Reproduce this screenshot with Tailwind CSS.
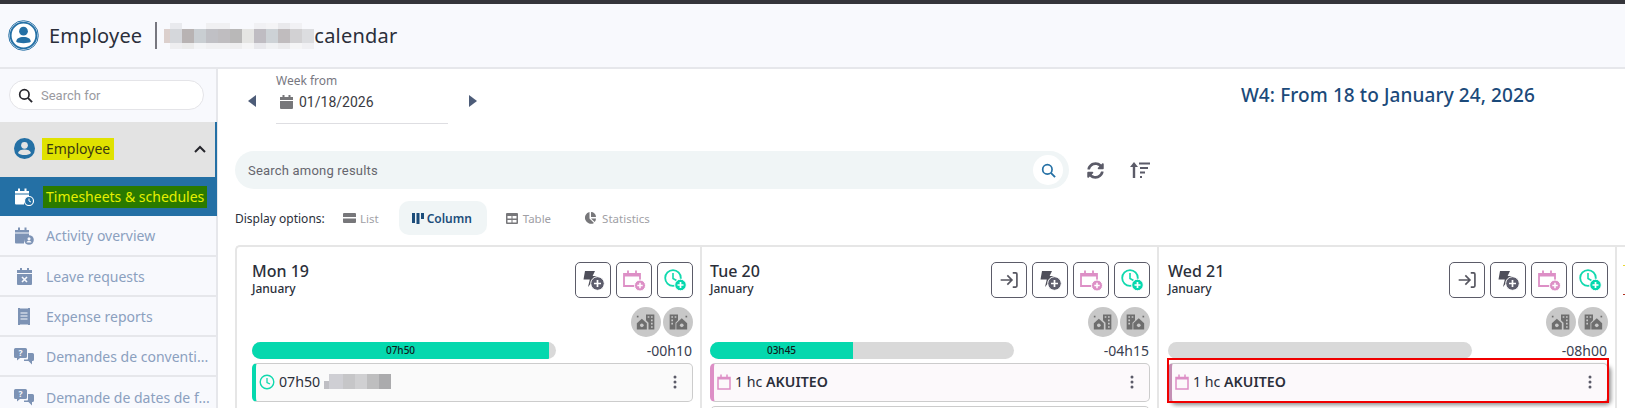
<!DOCTYPE html>
<html>
<head>
    <meta charset="utf-8">
    <title>Employee calendar</title>
    <script src="https://cdn.jsdelivr.net/npm/@tailwindcss/browser@4"></script>
</head>
<body class="w-[1625px] h-[408px] overflow-hidden bg-white font-['Noto_Sans','Open_Sans',sans-serif] text-[#2b2f3a]">
    <svg class="hidden" xmlns="http://www.w3.org/2000/svg">
        <symbol id="bolt" viewBox="0 0 24 24">
            <path fill="#4f4f5a" d="M4 3h10l-2.400 5H16L7 19l1.800-7.500H2.500z"/>
            <circle cx="16.500" cy="15.500" r="6.800" fill="#5d5d6c" stroke="#fff" stroke-width="1"/>
            <path stroke="#fff" stroke-width="1.700" d="M16.500 12v7M13 15.500h7"/>
        </symbol>
        <symbol id="calplus" viewBox="0 0 24 24">
            <path fill="none" stroke="#dd8fc6" stroke-width="1.800" d="M2 6h16v12H2zM6 2.500v3M14 2.500v3"/>
            <path fill="#dd8fc6" d="M2 5h16v3.500H2z"/>
            <circle cx="18" cy="17.500" r="5.500" fill="#dd8fc6" stroke="#fff"/>
            <path stroke="#fff" stroke-width="1.500" d="M18 14.800v5.400M15.300 17.500h5.400"/>
        </symbol>
        <symbol id="clockplus" viewBox="0 0 24 24">
            <circle cx="10" cy="10" r="7.800" fill="none" stroke="#10d9ae" stroke-width="1.800"/>
            <path fill="none" stroke="#10d9ae" stroke-width="1.600" d="M10 5v5.500l3.500 2"/>
            <circle cx="17.500" cy="17" r="5.800" fill="#05d8ae" stroke="#fff"/>
            <path stroke="#fff" stroke-width="1.700" d="M17.500 14v6M14.500 17h6"/>
        </symbol>
        <symbol id="enter" viewBox="0 0 24 24">
            <path fill="none" stroke="#55555f" stroke-width="2" d="M2 12h13M10 6.500l5.500 5.500-5.500 5.500M16.500 3.500h3.500a1.500 1.500 0 0 1 1.500 1.500v14a1.500 1.500 0 0 1-1.500 1.500h-3.500"/>
        </symbol>
        <symbol id="homework" viewBox="0 0 24 24">
            <path fill="#6e6e6e" d="M1 13.500l6-5.500 6 5.500V21H1z"/>
            <circle cx="7" cy="16" r="2.200" fill="#c8c8c8"/>
            <path fill="#6e6e6e" d="M12 3h10v18h-7v-8l-3-3z"/>
            <path fill="#c8c8c8" d="M14 5h2v2h-2zM18 5h2v2h-2zM18 9h2v2h-2zM18 13h2v2h-2zM18 17h2v2h-2z"/>
            <path fill="#6e6e6e" d="M1 4.500h2v2H1z"/>
        </symbol>
        <symbol id="workhome" viewBox="0 0 24 24">
            <path fill="#6e6e6e" d="M2 3h10v7l-3 3v8H2z"/>
            <path fill="#c8c8c8" d="M4 5h2v2H4zM8 5h2v2H8zM4 9h2v2H4zM4 13h2v2H4z"/>
            <path fill="#6e6e6e" d="M10 13.500l6.500-6 6.500 6V21H10z"/>
            <circle cx="16.500" cy="16" r="2.200" fill="#c8c8c8"/>
            <path fill="#6e6e6e" d="M21 4.500h2v2h-2z"/>
        </symbol>
        <symbol id="cal" viewBox="0 0 16 16">
            <path fill="none" stroke="#dd8fc6" stroke-width="1.500" d="M2 3.500h12V15H2zM5 .5v3M11 .5v3"/>
            <path fill="#dd8fc6" d="M2 3h12v2.500H2z"/>
        </symbol>
        <symbol id="kebab" viewBox="0 0 4 14">
            <circle cx="2" cy="2" r="1.500" fill="#5b5b68"/><circle cx="2" cy="7" r="1.500" fill="#5b5b68"/><circle cx="2" cy="12" r="1.500" fill="#5b5b68"/>
        </symbol>
        <symbol id="chat" viewBox="0 0 20 17">
            <path fill="#7d93b5" d="M1.500 0h10A1.500 1.500 0 0 1 13 1.500v7a1.500 1.500 0 0 1-1.500 1.500H6l-3 2.500V10H1.500A1.500 1.500 0 0 1 0 8.500v-7A1.500 1.500 0 0 1 1.500 0z"/>
            <path fill="#7d93b5" d="M14 5h4.500A1.500 1.500 0 0 1 20 6.500v5a1.500 1.500 0 0 1-1.500 1.500H18v3.500L14.500 13H10v-1.500h3.500A1 1 0 0 0 14 10.500z"/>
            <text x="6.500" y="7.800" font-size="8.500" font-weight="700" fill="#f8f9fd" text-anchor="middle" font-family="Noto Sans">?</text>
        </symbol>
    </svg>

    <div class="h-[4px] bg-[#35353b]"></div>

    <header class="h-[65px] bg-[#f8f9fd] border-b-2 border-[#e6e7eb] flex items-center pl-[8px]">
        <svg class="w-[31px] h-[31px] shrink-0" viewBox="0 0 32 32">
            <circle cx="16" cy="16" r="15.300" fill="none" stroke="#2470a5" stroke-width="1"/>
            <circle cx="16" cy="16" r="13.300" fill="#fff" stroke="#2470a5" stroke-width="2"/>
            <circle cx="16" cy="11.500" r="4.500" fill="#2470a5"/>
            <path fill="#2470a5" d="M8.500 22.500c0-3.500 3-5 7.500-5s7.500 1.500 7.500 5c-1.500 1-4.500 1.500-7.500 1.500s-6-.5-7.500-1.500z"/>
        </svg>
        <span class="ml-[10px] text-[20px] leading-[28px] tracking-[0.2px]">Employee</span>
        <div class="ml-[13px] w-[2px] h-[27px] bg-[#77777f]"></div>
        <svg class="ml-[7px] shrink-0 block" width="150" height="26" viewBox="0 0 150 26">
            <path fill="#e9eaee" d="M6 0h12v6H6z"/><path fill="#f0f0f2" d="M42 0h24v6H42z"/><path fill="#f1f1f4" d="M90 0h12v6H90z"/><path fill="#f4f4f6" d="M102 0h12v6h-12z"/><path fill="#e9e9ec" d="M114 0h12v6h-12z"/><path fill="#f1f1f4" d="M126 0h12v6h-12z"/>
            <path fill="#dcd0cd" d="M0 6h6v14H0z"/><path fill="#d5d7db" d="M6 6h12v14H6z"/><path fill="#b8b3b3" d="M18 6h12v14H18z"/><path fill="#c9ced2" d="M30 6h12v14H30z"/><path fill="#c0c0c5" d="M42 6h12v14H42z"/><path fill="#bfbdc0" d="M54 6h12v14H54z"/><path fill="#b9b8b8" d="M66 6h12v14H66z"/><path fill="#e5e5e3" d="M78 6h12v14H78z"/><path fill="#bfbcc2" d="M90 6h12v14H90z"/><path fill="#cdd2d6" d="M102 6h12v14h-12z"/><path fill="#c0bcbe" d="M114 6h12v14h-12z"/><path fill="#d2d1d3" d="M126 6h12v14h-12z"/><path fill="#dcdde0" d="M138 6h12v14h-12z"/>
            <path fill="#eeeef0" d="M6 20h12v6H6z"/><path fill="#ebebeb" d="M18 20h12v6H18z"/><path fill="#f3f4f6" d="M30 20h12v6H30z"/><path fill="#f0f0f2" d="M42 20h24v6H42z"/><path fill="#eeeeef" d="M66 20h12v6H66z"/><path fill="#f5f5f6" d="M78 20h12v6H78z"/><path fill="#e8e8ec" d="M90 20h12v6H90z"/><path fill="#f0f1f3" d="M102 20h12v6h-12z"/><path fill="#ebebed" d="M114 20h12v6h-12z"/><path fill="#f5f5f6" d="M126 20h12v6h-12z"/><path fill="#f0f0f3" d="M138 20h12v6h-12z"/>
        </svg>
        <span class="text-[20px] leading-[28px] tracking-[0.2px]">calendar</span>
    </header>

    <div class="flex h-[339px] overflow-hidden">
        <aside class="w-[218px] shrink-0 bg-[#f8f9fd] border-r-2 border-[#e6e7eb] text-[14px]">
            <div class="pt-[11px] pl-[9px] pr-[12px] h-[53px]">
                <div class="h-[30px] bg-white border border-[#e4e4e8] rounded-full flex items-center pl-[8px]">
                    <svg class="w-[15px] h-[15px]" viewBox="0 0 16 16"><circle cx="6.800" cy="6.800" r="5" fill="none" stroke="#26262c" stroke-width="1.800"/><path stroke="#26262c" stroke-width="2" d="M10.500 10.500l4.500 4.500"/></svg>
                    <span class="ml-[8px] pt-[1px] text-[#9a9a9f] text-[13px] font-['Roboto',sans-serif]">Search for</span>
                </div>
            </div>
            <div class="h-[55px] bg-[#e3e3e3] border-r-2 border-[#2470a5] -mr-[1px] flex items-center pl-[14px] pb-[2px]">
                <svg class="w-[21px] h-[21px] shrink-0" viewBox="0 0 20 20"><circle cx="10" cy="10" r="10" fill="#2470a5"/><circle cx="10" cy="7" r="3.200" fill="#e3e3e3"/><path fill="#e3e3e3" d="M3.800 14.300c.6-2.300 3-3.300 6.200-3.300s5.600 1 6.200 3.300c-1.500 1.300-3.700 2-6.200 2s-4.700-.7-6.200-2z"/></svg>
                <span class="ml-[7px] h-[22px] leading-[22px] px-[4px] bg-[#e0e200] text-[#3a3a10]">Employee</span>
                <svg class="ml-auto mr-[9px] w-[12px] h-[8px]" viewBox="0 0 12 8"><path fill="none" stroke="#26262c" stroke-width="2" d="M1 7l5-5 5 5"/></svg>
            </div>
            <div class="h-[39px] bg-[#2470a5] -mr-[1px] flex items-center pl-[15px]">
                <svg class="w-[19px] h-[18px] shrink-0" viewBox="0 0 19 18">
                    <path fill="#fff" d="M0 3h14v2.500H0zM0 6.500h14v3a6 6 0 0 0-5 7H1a1 1 0 0 1-1-1zM3 .5h2V3H3zM9.500.5h2V3h-2z"/>
                    <circle cx="14" cy="13" r="4.500" fill="#2470a5" stroke="#fff" stroke-width="1.200"/><path fill="none" stroke="#fff" d="M14 10.500V13l2 1"/>
                </svg>
                <span class="ml-[9px] h-[22px] leading-[22px] px-[3px] bg-[#2a7a00] text-[#e6f000] whitespace-nowrap">Timesheets &amp; schedules</span>
            </div>
            <div class="h-[41px] border-b-2 border-[#e6e7eb] flex items-center pl-[15px] text-[#8ba0bf]">
                <svg class="w-[19px] h-[18px] shrink-0" viewBox="0 0 19 18">
                    <path fill="#7d93b5" d="M0 3h14v2.500H0zM0 6.500h14v3a6 6 0 0 0-5 7H1a1 1 0 0 1-1-1zM3 .5h2V3H3zM9.500.5h2V3h-2z"/>
                    <circle cx="14" cy="13" r="4.800" fill="#7d93b5"/><circle cx="14" cy="11.800" r="1.500" fill="#f8f9fd"/><path fill="#f8f9fd" d="M11.500 15.500c.3-1.200 1.200-1.700 2.500-1.700s2.200.5 2.500 1.700z"/>
                </svg>
                <span class="ml-[12px]">Activity overview</span>
            </div>
            <div class="h-[40px] border-b-2 border-[#e6e7eb] flex items-center pl-[17px] pt-[1px] text-[#8ba0bf]">
                <svg class="w-[15px] h-[17px] shrink-0" viewBox="0 0 15 17"><path fill="#7d93b5" d="M0 2h15v3H0zM0 6h15v10a1 1 0 0 1-1 1H1a1 1 0 0 1-1-1zM3 0h2v2H3zM10 0h2v2h-2z"/><path stroke="#f8f9fd" stroke-width="1.600" d="M5 9l5 5M10 9l-5 5"/></svg>
                <span class="ml-[14px]">Leave requests</span>
            </div>
            <div class="h-[40px] border-b-2 border-[#e6e7eb] flex items-center pl-[18px] pt-[1px] text-[#8ba0bf]">
                <svg class="w-[12px] h-[17px] shrink-0" viewBox="0 0 12 17"><path fill="#7d93b5" d="M0 0h2l1 1 1-1 1 1 1-1 1 1 1-1 1 1 1-1h2v17h-2l-1-1-1 1-1-1-1 1-1-1-1 1-1-1-1 1H0z"/><path stroke="#f8f9fd" d="M2.500 5h7M2.500 8h7M2.500 11h7"/></svg>
                <span class="ml-[16px]">Expense reports</span>
            </div>
            <div class="h-[40px] border-b-2 border-[#e6e7eb] flex items-center pl-[14px] pt-[1px] text-[#8ba0bf]">
                <svg class="w-[20px] h-[17px] shrink-0"><use href="#chat"/></svg>
                <span class="ml-[12px] whitespace-nowrap">Demandes de conventi...</span>
            </div>
            <div class="h-[40px] flex items-center pl-[14px] pt-[1px] text-[#8ba0bf]">
                <svg class="w-[20px] h-[17px] shrink-0"><use href="#chat"/></svg>
                <span class="ml-[12px] whitespace-nowrap">Demande de dates de f...</span>
            </div>
        </aside>

        <main class="flex-1 min-w-0 pl-[17px]">
            <div class="h-[82px] flex">
                <svg class="ml-[13px] mt-[26px] w-[8px] h-[12px]" viewBox="0 0 8 12"><path fill="#4d5c78" d="M8 0v12L0 6z"/></svg>
                <div class="ml-[20px] w-[172px] h-[55px] border-b border-[#dedee2] pt-[4px]">
                    <div class="text-[12px] leading-[16px] text-[#77777f]">Week from</div>
                    <div class="mt-[3px] ml-[4px] flex items-center h-[20px]">
                        <svg class="w-[13px] h-[14px]" viewBox="0 0 13 14"><path fill="#77777a" d="M0 2h13v3H0zM0 6h13v7a1 1 0 0 1-1 1H1a1 1 0 0 1-1-1zM2.500 0h2v2h-2zM8.500 0h2v2h-2z"/></svg>
                        <span class="ml-[6px] text-[14px] font-['Roboto',sans-serif] text-[#3a3a42]">01/18/2026</span>
                    </div>
                </div>
                <svg class="ml-[21px] mt-[26px] w-[8px] h-[12px]" viewBox="0 0 8 12"><path fill="#4d5c78" d="M0 0v12l8-6z"/></svg>
                <div class="ml-auto mr-[90px] mt-[13px] h-[26px] text-[19px] leading-[26px] font-medium tracking-[0.1px] text-[#1b4a7a] whitespace-nowrap">W4: From 18 to January 24, 2026</div>
            </div>

            <div class="flex items-center h-[38px]">
                <div class="w-[834px] h-[38px] bg-[#f0f5f6] rounded-full flex items-center pl-[13px] pr-[6px]">
                    <span class="pt-[1px] text-[13px] font-['Roboto',sans-serif] text-[#66666e] tracking-[0.2px]">Search among results</span>
                    <span class="ml-auto w-[30px] h-[30px] rounded-full bg-white flex items-center justify-center">
                        <svg class="w-[15px] h-[15px]" viewBox="0 0 16 16"><circle cx="6.800" cy="6.800" r="5" fill="none" stroke="#2470a5" stroke-width="1.800"/><path stroke="#2470a5" stroke-width="2" d="M10.500 10.500l4.500 4.500"/></svg>
                    </span>
                </div>
                <svg class="ml-[18px] w-[17px] h-[17px]" viewBox="0 0 512 512"><path fill="#5b5b68" d="M370.700 133.300C339.500 104 298.900 88 255.800 88c-77.500.1-144.300 53.200-162.800 126.900-1.300 5.400-6.100 9.100-11.700 9.100H24.100c-7.500 0-13.200-6.800-11.800-14.200C33.900 94.900 134.800 8 256 8c66.400 0 126.800 26.100 171.300 68.700L463 41c15.100-15.100 41-4.400 41 17v134c0 13.300-10.700 24-24 24H346c-21.400 0-32.100-25.900-17-41zM32 296h134c21.400 0 32.100 25.900 17 41l-41.700 41.700c31.200 29.300 71.800 45.300 114.900 45.300 77.400-.1 144.300-53.100 162.800-126.800 1.300-5.400 6.100-9.100 11.700-9.100h57.300c7.500 0 13.200 6.800 11.800 14.200C478.100 417.100 377.200 504 256 504c-66.400 0-126.800-26.100-171.300-68.700L49 471c-15.100 15.100-41 4.400-41-17V320c0-13.300 10.700-24 24-24z"/></svg>
                <svg class="ml-[26px] w-[20px] h-[18px]" viewBox="0 0 20 18"><path fill="#5b5b68" d="M4 1l4 5H5.200v11H2.800V6H0zM9 1.500h11v2H9zM10 6h8v2h-8zM10 10.500h5v2h-5zM10 15h2v2h-2z"/></svg>
            </div>

            <div class="mt-[12px] h-[34px] flex items-center text-[11.500px]">
                <span class="w-[108px] pt-[1px] text-[#2b2f3a] text-[12px]">Display options:</span>
                <svg class="w-[13px] h-[10px]" viewBox="0 0 13 10"><path fill="#77777a" d="M1 0h11a1 1 0 0 1 1 1v3H0V1a1 1 0 0 1 1-1zM0 5.500h13V9a1 1 0 0 1-1 1H1a1 1 0 0 1-1-1z"/></svg>
                <span class="ml-[4px] pt-[1px] text-[#a0a0a5]">List</span>
                <div class="ml-[20px] w-[88px] h-[34px] rounded-[10px] bg-[#f0f5f6] flex items-center pl-[13px]">
                    <svg class="w-[12px] h-[11px]" viewBox="0 0 12 11"><path fill="#1c4d7a" d="M0 0h3v10H0zM4.500 0h3v11h-3zM9 0h3v6H9z"/></svg>
                    <span class="ml-[3px] pt-[1px] text-[12px] font-semibold text-[#1c4d7a]">Column</span>
                </div>
                <svg class="ml-[19px] w-[12px] h-[11px]" viewBox="0 0 12 11"><path fill="#77777a" d="M1 0h10a1 1 0 0 1 1 1v9a1 1 0 0 1-1 1H1a1 1 0 0 1-1-1V1a1 1 0 0 1 1-1zm.5 3v2.500h4V3zm5 0v2.500h4V3zm-5 4v2.500h4V7zm5 0v2.500h4V7z"/></svg>
                <span class="ml-[5px] pt-[1px] text-[#a0a0a5]">Table</span>
                <svg class="ml-[33px] w-[12px] h-[12px]" viewBox="0 0 12 12"><path fill="#77777a" d="M5.500 0v6.500l4.500 4.500A6 6 0 1 1 5.500 0zM7 0a5 5 0 0 1 5 5H7zM7 6.500h5a6 6 0 0 1-1.300 3.600z"/></svg>
                <span class="ml-[6px] pt-[1px] text-[#a0a0a5]">Statistics</span>
            </div>

            <div class="mt-[10px] border-2 border-b-0 border-r-0 border-[#e6e6e6] rounded-tl-[5px] flex h-[163px] overflow-hidden">
                <section class="w-[465px] shrink-0 border-r-2 border-[#e6e6e6] pl-[15px] pr-[7px] pt-[15px]">
                    <div class="flex justify-between h-[36px]">
                        <div>
                            <div class="text-[16px] leading-[18px] font-medium">Mon 19</div>
                            <div class="text-[12px] leading-[18px] font-medium">January</div>
                        </div>
                        <div class="flex gap-[5px]">
                            <button class="w-[36px] h-[36px] border border-[#5b5b68] rounded-[5px] flex items-center justify-center"><svg class="w-[24px] h-[24px]"><use href="#bolt"/></svg></button>
                            <button class="w-[36px] h-[36px] border border-[#5b5b68] rounded-[5px] flex items-center justify-center"><svg class="w-[24px] h-[24px]"><use href="#calplus"/></svg></button>
                            <button class="w-[36px] h-[36px] border border-[#5b5b68] rounded-[5px] flex items-center justify-center"><svg class="w-[24px] h-[24px]"><use href="#clockplus"/></svg></button>
                        </div>
                    </div>
                    <div class="mt-[9px] flex justify-end gap-[2px]">
                        <span class="w-[30px] h-[30px] rounded-full bg-[#c8c8c8] flex items-center justify-center"><svg class="w-[20px] h-[20px]"><use href="#homework"/></svg></span>
                        <span class="w-[30px] h-[30px] rounded-full bg-[#c8c8c8] flex items-center justify-center"><svg class="w-[20px] h-[20px]"><use href="#workhome"/></svg></span>
                    </div>
                    <div class="mt-[5px] h-[17px] flex items-center justify-between">
                        <div class="w-[304px] h-[17px] rounded-full bg-[#d9d9d9] overflow-hidden">
                            <div class="w-[297px] h-[17px] bg-[#05d8ae] text-[10px] leading-[17px] text-center text-[#10201c] font-medium">07h50</div>
                        </div>
                        <span class="mr-[1px] text-[14px] text-[#3a4050]">-00h10</span>
                    </div>
                    <div class="mt-[4px] h-[39px] bg-[#fafafa] border border-[#cccccc] border-l-[4px] border-l-[#05d8ae] rounded-[5px] flex items-center pl-[3px] pr-[15px] pb-[2px]">
                        <svg class="w-[16px] h-[16px] shrink-0" viewBox="0 0 16 16"><circle cx="8" cy="8" r="6.800" fill="none" stroke="#10d9ae" stroke-width="1.400"/><path fill="none" stroke="#10d9ae" stroke-width="1.300" d="M8 4v4.500l3 1.500"/></svg>
                        <span class="ml-[4px] text-[14.200px]">07h50</span>
                        <svg class="ml-[4px] block" width="67" height="15" viewBox="0 0 67 15"><path fill="#bfbfc4" d="M0 7h5v8H0z"/><path fill="#cfcfd4" d="M5 0h14v15H5z"/><path fill="#c6c6c8" d="M19 0h12v15H19z"/><path fill="#d0d0d2" d="M31 0h12v15H31z"/><path fill="#bebebf" d="M43 0h12v15H43z"/><path fill="#ababad" d="M55 0h12v15H55z"/></svg>
                        <svg class="ml-auto w-[4px] h-[14px]"><use href="#kebab"/></svg>
                    </div>
                </section>

                <section class="w-[457px] shrink-0 border-r-2 border-[#e6e6e6] pl-[8px] pr-[7px] pt-[15px]">
                    <div class="flex justify-between h-[36px]">
                        <div>
                            <div class="text-[16px] leading-[18px] font-medium">Tue 20</div>
                            <div class="text-[12px] leading-[18px] font-medium">January</div>
                        </div>
                        <div class="flex gap-[5px]">
                            <button class="w-[36px] h-[36px] border border-[#5b5b68] rounded-[5px] flex items-center justify-center"><svg class="w-[20px] h-[20px]"><use href="#enter"/></svg></button>
                            <button class="w-[36px] h-[36px] border border-[#5b5b68] rounded-[5px] flex items-center justify-center"><svg class="w-[24px] h-[24px]"><use href="#bolt"/></svg></button>
                            <button class="w-[36px] h-[36px] border border-[#5b5b68] rounded-[5px] flex items-center justify-center"><svg class="w-[24px] h-[24px]"><use href="#calplus"/></svg></button>
                            <button class="w-[36px] h-[36px] border border-[#5b5b68] rounded-[5px] flex items-center justify-center"><svg class="w-[24px] h-[24px]"><use href="#clockplus"/></svg></button>
                        </div>
                    </div>
                    <div class="mt-[9px] flex justify-end gap-[2px]">
                        <span class="w-[30px] h-[30px] rounded-full bg-[#c8c8c8] flex items-center justify-center"><svg class="w-[20px] h-[20px]"><use href="#homework"/></svg></span>
                        <span class="w-[30px] h-[30px] rounded-full bg-[#c8c8c8] flex items-center justify-center"><svg class="w-[20px] h-[20px]"><use href="#workhome"/></svg></span>
                    </div>
                    <div class="mt-[5px] h-[17px] flex items-center justify-between">
                        <div class="w-[304px] h-[17px] rounded-full bg-[#d9d9d9] overflow-hidden">
                            <div class="w-[143px] h-[17px] bg-[#05d8ae] text-[10px] leading-[17px] text-center text-[#10201c] font-medium">03h45</div>
                        </div>
                        <span class="mr-[1px] text-[14px] text-[#3a4050]">-04h15</span>
                    </div>
                    <div class="mt-[4px] h-[39px] bg-[#fcf9fb] border border-[#cccccc] border-l-[4px] border-l-[#dd8fc6] rounded-[5px] flex items-center pl-[2px] pr-[15px] pb-[2px]">
                        <svg class="w-[16px] h-[16px] shrink-0"><use href="#cal"/></svg>
                        <span class="ml-[3px] text-[14.200px]">1 hc <span class="font-semibold">AKUITEO</span></span>
                        <svg class="ml-auto w-[4px] h-[14px]"><use href="#kebab"/></svg>
                    </div>
                    <div class="mt-[4px] h-[39px] border border-[#cccccc] rounded-[5px]"></div>
                </section>

                <section class="w-[458px] shrink-0 border-r-2 border-[#e6e6e6] pl-[9px] pr-[7px] pt-[15px]">
                    <div class="flex justify-between h-[36px]">
                        <div>
                            <div class="text-[16px] leading-[18px] font-medium">Wed 21</div>
                            <div class="text-[12px] leading-[18px] font-medium">January</div>
                        </div>
                        <div class="flex gap-[5px]">
                            <button class="w-[36px] h-[36px] border border-[#5b5b68] rounded-[5px] flex items-center justify-center"><svg class="w-[20px] h-[20px]"><use href="#enter"/></svg></button>
                            <button class="w-[36px] h-[36px] border border-[#5b5b68] rounded-[5px] flex items-center justify-center"><svg class="w-[24px] h-[24px]"><use href="#bolt"/></svg></button>
                            <button class="w-[36px] h-[36px] border border-[#5b5b68] rounded-[5px] flex items-center justify-center"><svg class="w-[24px] h-[24px]"><use href="#calplus"/></svg></button>
                            <button class="w-[36px] h-[36px] border border-[#5b5b68] rounded-[5px] flex items-center justify-center"><svg class="w-[24px] h-[24px]"><use href="#clockplus"/></svg></button>
                        </div>
                    </div>
                    <div class="mt-[9px] flex justify-end gap-[2px]">
                        <span class="w-[30px] h-[30px] rounded-full bg-[#c8c8c8] flex items-center justify-center"><svg class="w-[20px] h-[20px]"><use href="#homework"/></svg></span>
                        <span class="w-[30px] h-[30px] rounded-full bg-[#c8c8c8] flex items-center justify-center"><svg class="w-[20px] h-[20px]"><use href="#workhome"/></svg></span>
                    </div>
                    <div class="mt-[5px] h-[17px] flex items-center justify-between">
                        <div class="w-[304px] h-[17px] rounded-full bg-[#d9d9d9]"></div>
                        <span class="mr-[1px] text-[14px] text-[#3a4050]">-08h00</span>
                    </div>
                    <div class="relative mt-[4px] h-[39px] bg-[#fcf9fb] border border-[#cccccc] border-l-[4px] border-l-[#c48fb4] rounded-[5px] flex items-center pl-[2px] pr-[15px] pb-[2px] shadow-[3px_3px_4px_rgba(0,0,0,0.45)]">
                        <svg class="w-[16px] h-[16px] shrink-0"><use href="#cal"/></svg>
                        <span class="ml-[3px] text-[14.200px]">1 hc <span class="font-semibold">AKUITEO</span></span>
                        <svg class="ml-auto w-[4px] h-[14px]"><use href="#kebab"/></svg>
                        <div class="absolute -left-[5px] -right-[2px] -top-[6px] -bottom-[2px] border-2 border-[#f00000]"></div>
                    </div>
                </section>

                <section class="flex-1 pl-[6px] pt-[18px]">
                    <div class="w-[2px] h-[1px] bg-[#e8d830]"></div>
                    <div class="mt-[28px] w-[2px] h-[1px] bg-[#b03020]"></div>
                </section>
            </div>
        </main>
    </div>
</body>
</html>
